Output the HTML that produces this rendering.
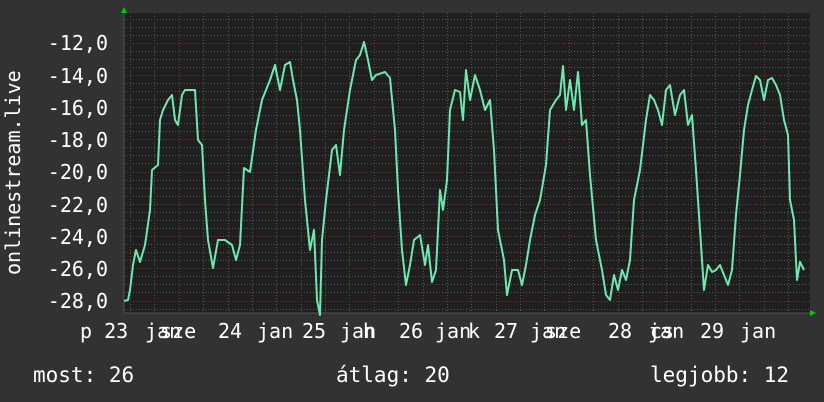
<!DOCTYPE html>
<html><head><meta charset="utf-8"><style>
html,body{margin:0;padding:0;background:#323232;width:824px;height:402px;overflow:hidden}
text{font-family:"DejaVu Sans Mono","Liberation Mono",monospace;fill:#fff}
</style></head><body>
<svg width="824" height="402" viewBox="0 0 824 402" xmlns="http://www.w3.org/2000/svg">
<rect width="824" height="402" fill="#323232"/>
<rect x="124" y="13" width="686" height="300" fill="#1f1f1f"/>
<g stroke="#555" stroke-width="1" stroke-dasharray="1,2">
<path d="M124 19.5H810M124 27.5H810M124 35.5H810M124 51.5H810M124 59.5H810M124 67.5H810M124 83.5H810M124 91.5H810M124 99.5H810M124 115.5H810M124 123.5H810M124 131.5H810M124 147.5H810M124 155.5H810M124 163.5H810M124 180.5H810M124 188.5H810M124 196.5H810M124 212.5H810M124 220.5H810M124 228.5H810M124 244.5H810M124 252.5H810M124 260.5H810M124 276.5H810M124 284.5H810M124 292.5H810M124 309.5H810"/>
<path d="M130.5 13V313M154.5 13V313M203.5 13V313M228.5 13V313M252.5 13V313M276.5 13V313M301.5 13V313M325.5 13V313M349.5 13V313M398.5 13V313M423.5 13V313M447.5 13V313M471.5 13V313M496.5 13V313M520.5 13V313M544.5 13V313M593.5 13V313M618.5 13V313M642.5 13V313M666.5 13V313M691.5 13V313M715.5 13V313M739.5 13V313M788.5 13V313"/>
</g>
<g stroke="#7a3a3a" stroke-width="1" stroke-dasharray="1,2">
<path d="M124 43.5H810M124 75.5H810M124 107.5H810M124 139.5H810M124 172.5H810M124 204.5H810M124 236.5H810M124 268.5H810M124 301.5H810"/>
<path d="M179.5 13V313M374.5 13V313M569.5 13V313M764.5 13V313"/>
</g>
<path d="M124 313H816M124 10V313" stroke="#555" stroke-width="1"/>
<path d="M121 13L124 7L127 13Z" fill="#0c0"/>
<path d="M810 310L816 313L810 316Z" fill="#0c0"/>
<polyline fill="none" stroke="#6fe8b0" stroke-width="2" stroke-linejoin="round" points="124,301 128,300 130,290 133,265 136,250 140,262 145,245 150,210 152,170 158,165 160,120 163,110 168,100 172,95 175,120 178,125 182,95 185,90 195,90 198,140 202,145 205,200 208,240 213,268 218,240 225,240 232,245 236,260 240,245 244,168 250,172 256,130 262,100 266,90 270,80 275,65 280,90 285,65 290,62 293,80 297,100 300,130 305,200 310,250 314,230 317,300 320,315 322,240 326,200 332,150 336,145 340,175 344,130 350,90 356,60 360,55 364,42 368,60 372,80 376,75 385,72 390,78 395,130 398,190 402,250 406,285 410,265 414,240 420,235 425,265 428,245 432,282 436,270 440,190 443,210 447,180 450,110 455,90 460,92 463,120 466,70 470,100 475,75 480,90 485,110 490,100 494,150 498,230 504,260 507,295 512,270 518,270 522,285 526,265 530,240 535,215 540,200 546,165 550,110 556,100 560,95 563,66 566,110 570,80 574,110 578,72 582,125 586,120 590,175 596,240 602,270 606,295 610,300 614,275 618,290 622,270 626,280 630,260 634,200 640,170 646,120 650,95 654,100 658,110 662,125 666,90 670,85 675,115 680,95 684,90 688,125 692,115 696,170 700,230 704,290 708,265 712,272 716,270 720,265 724,275 728,285 732,270 736,215 740,175 744,130 748,105 752,90 756,76 760,80 764,100 768,80 772,78 776,85 780,95 784,120 788,135 790,200 794,220 797,280 800,262 804,270"/>
<g font-size="20" text-anchor="end">
<text x="108" y="50">-12,0</text>
<text x="108" y="83">-14,0</text>
<text x="108" y="115">-16,0</text>
<text x="108" y="147">-18,0</text>
<text x="108" y="179">-20,0</text>
<text x="108" y="212">-22,0</text>
<text x="108" y="244">-24,0</text>
<text x="108" y="276">-26,0</text>
<text x="108" y="308">-28,0</text>
</g>
<text font-size="20" transform="translate(20,275) rotate(-90)">onlinestream.live</text>
<g font-size="20">
<text x="80" y="338">p 23</text>
<text x="145" y="338">jan</text>
<text x="160" y="338">sze</text>
<text x="218" y="338">24</text>
<text x="257" y="338">jan</text>
<text x="302" y="338">25</text>
<text x="340" y="338">jan</text>
<text x="363" y="338">h</text>
<text x="399" y="338">26</text>
<text x="435" y="338">jan</text>
<text x="468" y="338">k</text>
<text x="494" y="338">27</text>
<text x="530" y="338">jan</text>
<text x="545" y="338">sze</text>
<text x="608" y="338">28</text>
<text x="648" y="338">jan</text>
<text x="650" y="338">cs</text>
<text x="700" y="338">29</text>
<text x="740" y="338">jan</text>
<text x="33" y="382" font-size="21">most: 26</text>
<text x="336" y="382" font-size="21">átlag: 20</text>
<text x="650" y="382" font-size="21">legjobb: 12</text>
</g>
</svg>
</body></html>
